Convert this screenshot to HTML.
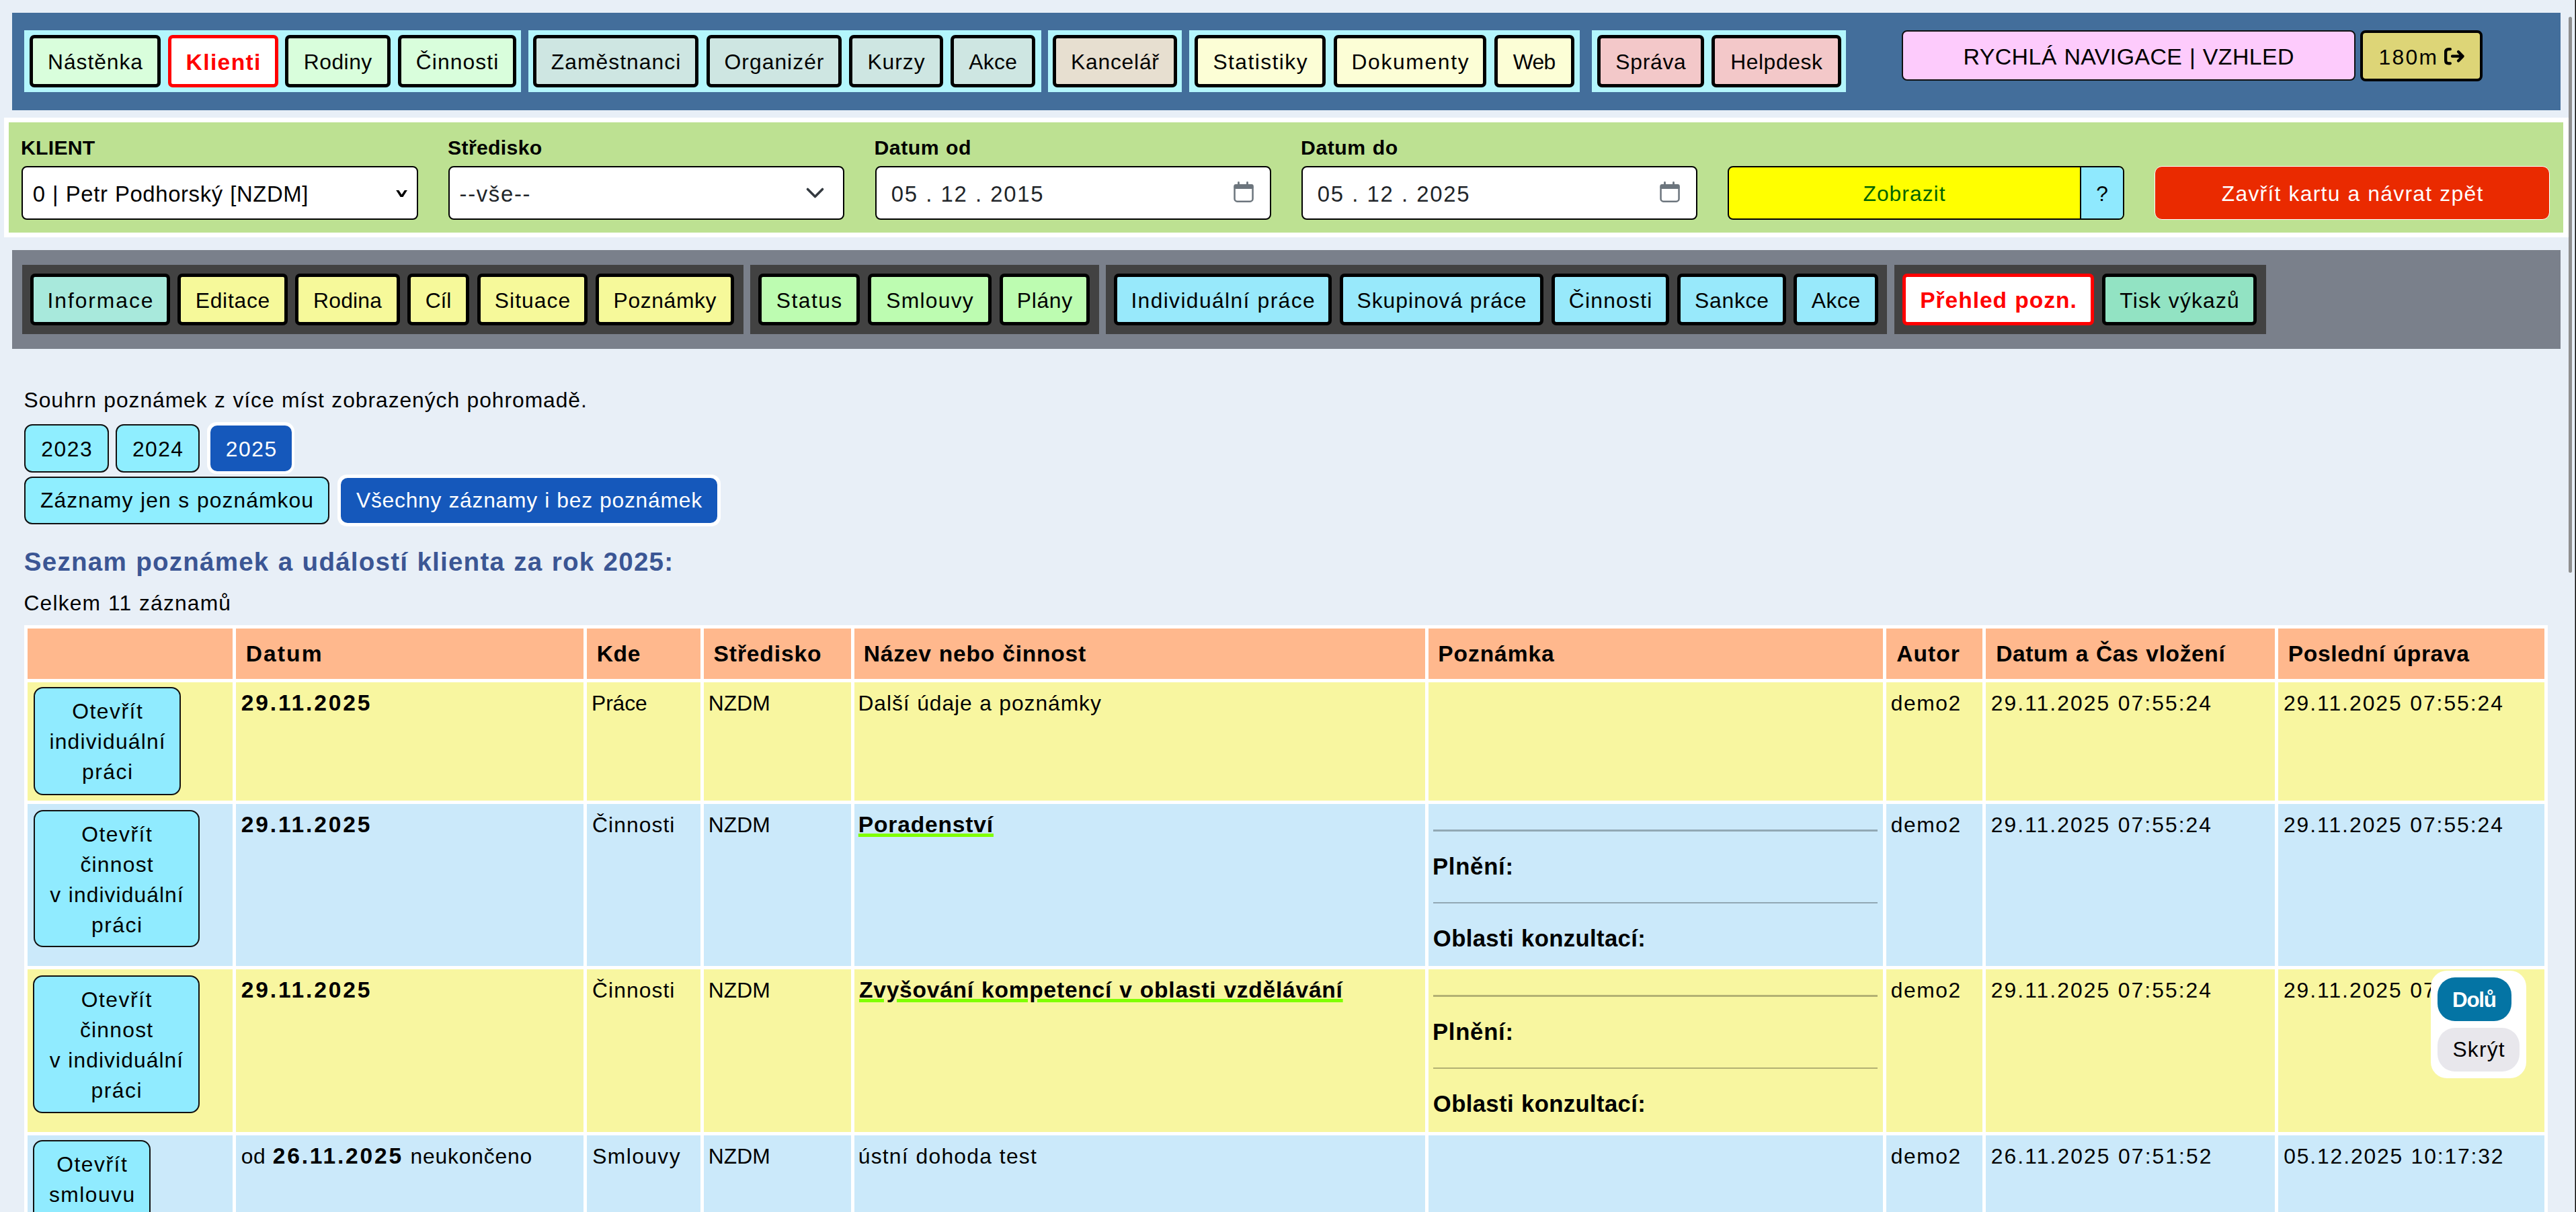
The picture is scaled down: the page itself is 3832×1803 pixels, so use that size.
<!DOCTYPE html>
<html><head><meta charset="utf-8"><title>Přehled poznámek</title>
<style>
html,body{margin:0;padding:0}
body{width:3832px;height:1803px;overflow:hidden;position:relative;background:#e8eff7;font-family:'Liberation Sans', sans-serif;color:#000}
.a{position:absolute;box-sizing:border-box}
.t{white-space:nowrap}
</style></head><body>
<div class="a" style="left:18px;top:19px;width:3791px;height:145px;background:#436e9b"></div>
<div class="a" style="left:36px;top:45px;width:739px;height:92px;background:#b3f6fc"></div>
<div class="a" style="left:786px;top:45px;width:763px;height:92px;background:#b3f6fc"></div>
<div class="a" style="left:1559px;top:45px;width:199px;height:92px;background:#b3f6fc"></div>
<div class="a" style="left:1769px;top:45px;width:581px;height:92px;background:#b3f6fc"></div>
<div class="a" style="left:2368px;top:45px;width:378px;height:92px;background:#b3f6fc"></div>
<div class="a" style="left:44px;top:52px;width:195px;height:78px;border:5px solid #000;border-radius:7px;background:#d9fedc"></div>
<div class="a t" style="left:44px;width:195px;text-align:center;text-indent:0.96px;top:75.32px;line-height:35.52px;font-size:31.80px;letter-spacing:0.96px;word-spacing:0.70px;font-weight:normal;color:#000;">Nástěnka</div>
<div class="a" style="left:250px;top:52px;width:164px;height:78px;border:5px solid #f00;border-radius:7px;background:#fff"></div>
<div class="a t" style="left:250px;width:164px;text-align:center;text-indent:1.38px;top:73.69px;line-height:37.53px;font-size:33.60px;letter-spacing:1.38px;word-spacing:1.11px;font-weight:bold;color:#f00;">Klienti</div>
<div class="a" style="left:424px;top:52px;width:157px;height:78px;border:5px solid #000;border-radius:7px;background:#d9fedc"></div>
<div class="a t" style="left:424px;width:157px;text-align:center;text-indent:0.49px;top:75.32px;line-height:35.52px;font-size:31.80px;letter-spacing:0.49px;word-spacing:0.70px;font-weight:normal;color:#000;">Rodiny</div>
<div class="a" style="left:592px;top:52px;width:176px;height:78px;border:5px solid #000;border-radius:7px;background:#d9fedc"></div>
<div class="a t" style="left:592px;width:176px;text-align:center;text-indent:1.11px;top:75.32px;line-height:35.52px;font-size:31.80px;letter-spacing:1.11px;word-spacing:0.70px;font-weight:normal;color:#000;">Činnosti</div>
<div class="a" style="left:793px;top:52px;width:246px;height:78px;border:5px solid #000;border-radius:7px;background:#cee6e2"></div>
<div class="a t" style="left:793px;width:246px;text-align:center;text-indent:1.05px;top:75.32px;line-height:35.52px;font-size:31.80px;letter-spacing:1.05px;word-spacing:0.70px;font-weight:normal;color:#000;">Zaměstnanci</div>
<div class="a" style="left:1051px;top:52px;width:201px;height:78px;border:5px solid #000;border-radius:7px;background:#cee6e2"></div>
<div class="a t" style="left:1051px;width:201px;text-align:center;text-indent:1.04px;top:75.32px;line-height:35.52px;font-size:31.80px;letter-spacing:1.04px;word-spacing:0.70px;font-weight:normal;color:#000;">Organizér</div>
<div class="a" style="left:1263px;top:52px;width:140px;height:78px;border:5px solid #000;border-radius:7px;background:#cee6e2"></div>
<div class="a t" style="left:1263px;width:140px;text-align:center;text-indent:0.96px;top:75.32px;line-height:35.52px;font-size:31.80px;letter-spacing:0.96px;word-spacing:0.70px;font-weight:normal;color:#000;">Kurzy</div>
<div class="a" style="left:1414px;top:52px;width:126px;height:78px;border:5px solid #000;border-radius:7px;background:#cee6e2"></div>
<div class="a t" style="left:1414px;width:126px;text-align:center;text-indent:0.33px;top:75.32px;line-height:35.52px;font-size:31.80px;letter-spacing:0.33px;word-spacing:0.70px;font-weight:normal;color:#000;">Akce</div>
<div class="a" style="left:1566px;top:52px;width:185px;height:78px;border:5px solid #000;border-radius:7px;background:#e7dfd0"></div>
<div class="a t" style="left:1566px;width:185px;text-align:center;text-indent:0.78px;top:75.32px;line-height:35.52px;font-size:31.80px;letter-spacing:0.78px;word-spacing:0.70px;font-weight:normal;color:#000;">Kancelář</div>
<div class="a" style="left:1777px;top:52px;width:195px;height:78px;border:5px solid #000;border-radius:7px;background:#fcfed6"></div>
<div class="a t" style="left:1777px;width:195px;text-align:center;text-indent:1.43px;top:75.32px;line-height:35.52px;font-size:31.80px;letter-spacing:1.43px;word-spacing:0.70px;font-weight:normal;color:#000;">Statistiky</div>
<div class="a" style="left:1984px;top:52px;width:227px;height:78px;border:5px solid #000;border-radius:7px;background:#fcfed6"></div>
<div class="a t" style="left:1984px;width:227px;text-align:center;text-indent:1.66px;top:75.32px;line-height:35.52px;font-size:31.80px;letter-spacing:1.66px;word-spacing:0.70px;font-weight:normal;color:#000;">Dokumenty</div>
<div class="a" style="left:2223px;top:52px;width:119px;height:78px;border:5px solid #000;border-radius:7px;background:#fcfed6"></div>
<div class="a t" style="left:2223px;width:119px;text-align:center;text-indent:-0.64px;top:75.32px;line-height:35.52px;font-size:31.80px;letter-spacing:-0.64px;word-spacing:0.70px;font-weight:normal;color:#000;">Web</div>
<div class="a" style="left:2376px;top:52px;width:159px;height:78px;border:5px solid #000;border-radius:7px;background:#f3c8c9"></div>
<div class="a t" style="left:2376px;width:159px;text-align:center;text-indent:0.76px;top:75.32px;line-height:35.52px;font-size:31.80px;letter-spacing:0.76px;word-spacing:0.70px;font-weight:normal;color:#000;">Správa</div>
<div class="a" style="left:2546px;top:52px;width:193px;height:78px;border:5px solid #000;border-radius:7px;background:#f3c8c9"></div>
<div class="a t" style="left:2546px;width:193px;text-align:center;text-indent:0.59px;top:75.32px;line-height:35.52px;font-size:31.80px;letter-spacing:0.59px;word-spacing:0.70px;font-weight:normal;color:#000;">Helpdesk</div>
<div class="a" style="left:2829px;top:45px;width:675px;height:75px;border:2px solid #111;border-radius:8px;background:#fdcbfc"></div>
<div class="a t" style="left:2829px;width:675px;text-align:center;text-indent:0.41px;top:65.80px;line-height:37.89px;font-size:33.92px;letter-spacing:0.41px;word-spacing:0.75px;font-weight:normal;color:#000;">RYCHLÁ NAVIGACE | VZHLED</div>
<div class="a" style="left:3511px;top:45px;width:182px;height:76px;border:4px solid #000;border-radius:8px;background:#ddd577"></div>
<div class="a t" style="left:3538.61px;top:67.72px;line-height:35.52px;font-size:31.80px;letter-spacing:2.32px;word-spacing:0.70px;font-weight:normal;color:#000;">180m</div>
<svg class="a" style="left:3630px;top:65px" width="40" height="40" viewBox="0 0 40 40"><path d="M14.85 8.15 H12.5 Q8.15 8.15 8.15 12.5 V25 Q8.15 29.35 12.5 29.35 H14.85" fill="none" stroke="#000" stroke-width="4.3" stroke-linecap="round"/><path d="M18 18.7 H33.6 M27 12 L33.6 18.7 L27 25.4" fill="none" stroke="#000" stroke-width="4.3" stroke-linecap="round" stroke-linejoin="round"/></svg>
<div class="a" style="left:6px;top:175px;width:3815px;height:178px;background:#fff"></div>
<div class="a" style="left:13px;top:182px;width:3800px;height:164px;background:#bde192"></div>
<div class="a t" style="left:31.03px;top:203.13px;line-height:33.78px;font-size:30.24px;letter-spacing:0.22px;word-spacing:1.00px;font-weight:bold;color:#000;">KLIENT</div>
<div class="a t" style="left:666.09px;top:203.13px;line-height:33.78px;font-size:30.24px;letter-spacing:0.30px;word-spacing:1.00px;font-weight:bold;color:#000;">Středisko</div>
<div class="a t" style="left:1300.53px;top:203.13px;line-height:33.78px;font-size:30.24px;letter-spacing:0.50px;word-spacing:1.00px;font-weight:bold;color:#000;">Datum od</div>
<div class="a t" style="left:1935.03px;top:203.13px;line-height:33.78px;font-size:30.24px;letter-spacing:0.54px;word-spacing:1.00px;font-weight:bold;color:#000;">Datum do</div>
<div class="a" style="left:32px;top:247px;width:590px;height:80px;border:2px solid #000;border-radius:8px;background:#fff;"></div>
<div class="a t" style="left:48.69px;top:270.76px;line-height:36.70px;font-size:32.86px;letter-spacing:0.62px;word-spacing:0.73px;font-weight:normal;color:#000;">0 | Petr Podhorský [NZDM]</div>
<svg class="a" style="left:585px;top:279px" width="24" height="18" viewBox="0 0 24 18"><path d="M4.2 3.9 H8.3 L12.55 10.5 L16.8 3.9 H20.9 L14.5 14.1 H10.6 Z" fill="#000"/></svg>
<div class="a" style="left:667px;top:247px;width:589px;height:80px;border:2px solid #000;border-radius:8px;background:#fff;"></div>
<div class="a t" style="left:683.52px;top:270.76px;line-height:36.70px;font-size:32.86px;letter-spacing:1.67px;word-spacing:0.73px;font-weight:normal;color:#212529;">--vše--</div>
<svg class="a" style="left:1197px;top:277px" width="30" height="20" viewBox="0 0 30 20"><path d="M4.5 4.5 L15.5 15.5 L26.5 4.5" fill="none" stroke="#343a40" stroke-width="3.6" stroke-linecap="round" stroke-linejoin="round"/></svg>
<div class="a" style="left:1302px;top:247px;width:589px;height:80px;border:2px solid #000;border-radius:8px;background:#fff;"></div>
<div class="a t" style="left:1325.69px;top:270.76px;line-height:36.70px;font-size:32.86px;letter-spacing:1.68px;word-spacing:0.73px;font-weight:normal;color:#212529;">05 . 12 . 2015</div>
<svg class="a" style="left:1830px;top:267px" width="40" height="36" viewBox="0 0 40 36"><rect x="6.55" y="8.15" width="27" height="24.5" rx="4" fill="none" stroke="#6c757d" stroke-width="2.5"/><rect x="5.3" y="7" width="29.5" height="7" rx="3" fill="#6c757d"/><path d="M12.5 4.5 V8 M25.5 4.5 V8" stroke="#6c757d" stroke-width="2.8" stroke-linecap="round"/></svg>
<div class="a" style="left:1936px;top:247px;width:589px;height:80px;border:2px solid #000;border-radius:8px;background:#fff;"></div>
<div class="a t" style="left:1959.69px;top:270.76px;line-height:36.70px;font-size:32.86px;letter-spacing:1.68px;word-spacing:0.73px;font-weight:normal;color:#212529;">05 . 12 . 2025</div>
<svg class="a" style="left:2464px;top:267px" width="40" height="36" viewBox="0 0 40 36"><rect x="6.55" y="8.15" width="27" height="24.5" rx="4" fill="none" stroke="#6c757d" stroke-width="2.5"/><rect x="5.3" y="7" width="29.5" height="7" rx="3" fill="#6c757d"/><path d="M12.5 4.5 V8 M25.5 4.5 V8" stroke="#6c757d" stroke-width="2.8" stroke-linecap="round"/></svg>
<div class="a" style="left:2570px;top:247px;width:590px;height:80px;border:2px solid #000;border-radius:8px;background:#ffff00;overflow:hidden"><div class="a" style="left:522px;top:0;width:66px;height:76px;border-left:2px solid #000;background:#8fe9fe"></div></div>
<div class="a t" style="left:2570px;width:525px;text-align:center;text-indent:1.04px;top:270.72px;line-height:35.52px;font-size:31.80px;letter-spacing:1.04px;word-spacing:0.70px;font-weight:normal;color:#006400;">Zobrazit</div>
<div class="a t" style="left:3095px;width:64px;text-align:center;text-indent:-2.76px;top:270.72px;line-height:35.52px;font-size:31.80px;letter-spacing:-2.76px;word-spacing:0.70px;font-weight:normal;color:#000;">?</div>
<div class="a" style="left:3205px;top:247px;width:588px;height:80px;border:1.5px solid #fff;border-radius:11px;background:#ea2a00"></div>
<div class="a t" style="left:3205px;width:588px;text-align:center;text-indent:1.29px;top:270.72px;line-height:35.52px;font-size:31.80px;letter-spacing:1.29px;word-spacing:0.70px;font-weight:normal;color:#fff;">Zavřít kartu a návrat zpět</div>
<div class="a" style="left:18px;top:372px;width:3791px;height:147px;background:#7a808b"></div>
<div class="a" style="left:33px;top:394px;width:1073px;height:103px;background:#424242"></div>
<div class="a" style="left:1116px;top:394px;width:519px;height:103px;background:#424242"></div>
<div class="a" style="left:1645px;top:394px;width:1162px;height:103px;background:#424242"></div>
<div class="a" style="left:2818px;top:394px;width:553px;height:103px;background:#424242"></div>
<div class="a" style="left:45px;top:407px;width:208px;height:77px;border:5px solid #000;border-radius:7px;background:#a8e9dc"></div>
<div class="a t" style="left:45px;width:208px;text-align:center;text-indent:1.93px;top:429.72px;line-height:35.52px;font-size:31.80px;letter-spacing:1.93px;word-spacing:0.70px;font-weight:normal;color:#000;">Informace</div>
<div class="a" style="left:264px;top:407px;width:164px;height:77px;border:5px solid #000;border-radius:7px;background:#f6f99a"></div>
<div class="a t" style="left:264px;width:164px;text-align:center;text-indent:0.74px;top:429.72px;line-height:35.52px;font-size:31.80px;letter-spacing:0.74px;word-spacing:0.70px;font-weight:normal;color:#000;">Editace</div>
<div class="a" style="left:439px;top:407px;width:156px;height:77px;border:5px solid #000;border-radius:7px;background:#f6f99a"></div>
<div class="a t" style="left:439px;width:156px;text-align:center;text-indent:0.23px;top:429.72px;line-height:35.52px;font-size:31.80px;letter-spacing:0.23px;word-spacing:0.70px;font-weight:normal;color:#000;">Rodina</div>
<div class="a" style="left:606px;top:407px;width:92px;height:77px;border:5px solid #000;border-radius:7px;background:#f6f99a"></div>
<div class="a t" style="left:606px;width:92px;text-align:center;text-indent:-0.17px;top:429.72px;line-height:35.52px;font-size:31.80px;letter-spacing:-0.17px;word-spacing:0.70px;font-weight:normal;color:#000;">Cíl</div>
<div class="a" style="left:710px;top:407px;width:164px;height:77px;border:5px solid #000;border-radius:7px;background:#f6f99a"></div>
<div class="a t" style="left:710px;width:164px;text-align:center;text-indent:1.05px;top:429.72px;line-height:35.52px;font-size:31.80px;letter-spacing:1.05px;word-spacing:0.70px;font-weight:normal;color:#000;">Situace</div>
<div class="a" style="left:886px;top:407px;width:206px;height:77px;border:5px solid #000;border-radius:7px;background:#f6f99a"></div>
<div class="a t" style="left:886px;width:206px;text-align:center;text-indent:0.64px;top:429.72px;line-height:35.52px;font-size:31.80px;letter-spacing:0.64px;word-spacing:0.70px;font-weight:normal;color:#000;">Poznámky</div>
<div class="a" style="left:1128px;top:407px;width:151px;height:77px;border:5px solid #000;border-radius:7px;background:#bdfcb1"></div>
<div class="a t" style="left:1128px;width:151px;text-align:center;text-indent:1.48px;top:429.72px;line-height:35.52px;font-size:31.80px;letter-spacing:1.48px;word-spacing:0.70px;font-weight:normal;color:#000;">Status</div>
<div class="a" style="left:1291px;top:407px;width:184px;height:77px;border:5px solid #000;border-radius:7px;background:#bdfcb1"></div>
<div class="a t" style="left:1291px;width:184px;text-align:center;text-indent:1.27px;top:429.72px;line-height:35.52px;font-size:31.80px;letter-spacing:1.27px;word-spacing:0.70px;font-weight:normal;color:#000;">Smlouvy</div>
<div class="a" style="left:1487px;top:407px;width:134px;height:77px;border:5px solid #000;border-radius:7px;background:#bdfcb1"></div>
<div class="a t" style="left:1487px;width:134px;text-align:center;text-indent:0.70px;top:429.72px;line-height:35.52px;font-size:31.80px;letter-spacing:0.70px;word-spacing:0.70px;font-weight:normal;color:#000;">Plány</div>
<div class="a" style="left:1657px;top:407px;width:324px;height:77px;border:5px solid #000;border-radius:7px;background:#98e9fb"></div>
<div class="a t" style="left:1657px;width:324px;text-align:center;text-indent:1.37px;top:429.72px;line-height:35.52px;font-size:31.80px;letter-spacing:1.37px;word-spacing:0.70px;font-weight:normal;color:#000;">Individuální práce</div>
<div class="a" style="left:1993px;top:407px;width:303px;height:77px;border:5px solid #000;border-radius:7px;background:#98e9fb"></div>
<div class="a t" style="left:1993px;width:303px;text-align:center;text-indent:1.04px;top:429.72px;line-height:35.52px;font-size:31.80px;letter-spacing:1.04px;word-spacing:0.70px;font-weight:normal;color:#000;">Skupinová práce</div>
<div class="a" style="left:2308px;top:407px;width:175px;height:77px;border:5px solid #000;border-radius:7px;background:#98e9fb"></div>
<div class="a t" style="left:2308px;width:175px;text-align:center;text-indent:1.24px;top:429.72px;line-height:35.52px;font-size:31.80px;letter-spacing:1.24px;word-spacing:0.70px;font-weight:normal;color:#000;">Činnosti</div>
<div class="a" style="left:2495px;top:407px;width:162px;height:77px;border:5px solid #000;border-radius:7px;background:#98e9fb"></div>
<div class="a t" style="left:2495px;width:162px;text-align:center;text-indent:0.76px;top:429.72px;line-height:35.52px;font-size:31.80px;letter-spacing:0.76px;word-spacing:0.70px;font-weight:normal;color:#000;">Sankce</div>
<div class="a" style="left:2668px;top:407px;width:126px;height:77px;border:5px solid #000;border-radius:7px;background:#98e9fb"></div>
<div class="a t" style="left:2668px;width:126px;text-align:center;text-indent:0.60px;top:429.72px;line-height:35.52px;font-size:31.80px;letter-spacing:0.60px;word-spacing:0.70px;font-weight:normal;color:#000;">Akce</div>
<div class="a" style="left:2830px;top:407px;width:285px;height:77px;border:5px solid #f00;border-radius:7px;background:#fff"></div>
<div class="a t" style="left:2830px;width:285px;text-align:center;text-indent:0.94px;top:428.09px;line-height:37.53px;font-size:33.60px;letter-spacing:0.94px;word-spacing:1.11px;font-weight:bold;color:#f00;">Přehled pozn.</div>
<div class="a" style="left:3127px;top:407px;width:230px;height:77px;border:5px solid #000;border-radius:7px;background:#92e3c3"></div>
<div class="a t" style="left:3127px;width:230px;text-align:center;text-indent:1.17px;top:429.72px;line-height:35.52px;font-size:31.80px;letter-spacing:1.17px;word-spacing:0.70px;font-weight:normal;color:#000;">Tisk výkazů</div>
<div class="a t" style="left:35.57px;top:577.72px;line-height:35.52px;font-size:31.80px;letter-spacing:0.95px;word-spacing:0.70px;font-weight:normal;color:#000;">Souhrn poznámek z více míst zobrazených pohromadě.</div>
<div class="a" style="left:36px;top:631px;width:126px;height:72px;border:2px solid #111;border-radius:12px;background:#8feeff;"></div>
<div class="a t" style="left:36px;width:126px;text-align:center;text-indent:1.62px;top:651.02px;line-height:35.52px;font-size:31.80px;letter-spacing:1.62px;word-spacing:0.70px;font-weight:normal;color:#000;">2023</div>
<div class="a" style="left:172px;top:631px;width:125px;height:72px;border:2px solid #111;border-radius:12px;background:#8feeff;"></div>
<div class="a t" style="left:172px;width:125px;text-align:center;text-indent:1.46px;top:651.02px;line-height:35.52px;font-size:31.80px;letter-spacing:1.46px;word-spacing:0.70px;font-weight:normal;color:#000;">2024</div>
<div class="a" style="left:308px;top:628px;width:130px;height:77px;background:#fff;border-radius:14px"></div>
<div class="a" style="left:313px;top:633px;width:121px;height:68px;background:#1558bb;border-radius:10px"></div>
<div class="a t" style="left:313px;width:121px;text-align:center;text-indent:1.57px;top:651.02px;line-height:35.52px;font-size:31.80px;letter-spacing:1.57px;word-spacing:0.70px;font-weight:normal;color:#fff;">2025</div>
<div class="a" style="left:36px;top:709px;width:454px;height:71px;border:2px solid #111;border-radius:12px;background:#8feeff;"></div>
<div class="a t" style="left:36px;width:454px;text-align:center;text-indent:1.08px;top:727.42px;line-height:35.52px;font-size:31.80px;letter-spacing:1.08px;word-spacing:0.70px;font-weight:normal;color:#000;">Záznamy jen s poznámkou</div>
<div class="a" style="left:502px;top:706px;width:570px;height:77px;background:#fff;border-radius:14px"></div>
<div class="a" style="left:507px;top:711px;width:560px;height:67px;background:#1558bb;border-radius:10px"></div>
<div class="a t" style="left:507px;width:560px;text-align:center;text-indent:0.75px;top:727.42px;line-height:35.52px;font-size:31.80px;letter-spacing:0.75px;word-spacing:0.70px;font-weight:normal;color:#fff;">Všechny záznamy i bez poznámek</div>
<div class="a t" style="left:35.84px;top:814.03px;line-height:43.16px;font-size:38.64px;letter-spacing:1.19px;word-spacing:1.28px;font-weight:bold;color:#3b5694;">Seznam poznámek a událostí klienta za rok 2025:</div>
<div class="a t" style="left:35.41px;top:880.32px;line-height:35.52px;font-size:31.80px;letter-spacing:1.17px;word-spacing:0.70px;font-weight:normal;color:#000;">Celkem 11 záznamů</div>
<div class="a" style="left:36px;top:930px;width:3754px;height:873px;background:#fff"></div>
<div class="a" style="left:41px;top:935px;width:305px;height:75px;background:#ffb88d"></div>
<div class="a" style="left:351px;top:935px;width:517px;height:75px;background:#ffb88d"></div>
<div class="a" style="left:873px;top:935px;width:169px;height:75px;background:#ffb88d"></div>
<div class="a" style="left:1047px;top:935px;width:219px;height:75px;background:#ffb88d"></div>
<div class="a" style="left:1271px;top:935px;width:849px;height:75px;background:#ffb88d"></div>
<div class="a" style="left:2125px;top:935px;width:676px;height:75px;background:#ffb88d"></div>
<div class="a" style="left:2806px;top:935px;width:143px;height:75px;background:#ffb88d"></div>
<div class="a" style="left:2954px;top:935px;width:430px;height:75px;background:#ffb88d"></div>
<div class="a" style="left:3389px;top:935px;width:396px;height:75px;background:#ffb88d"></div>
<div class="a" style="left:41px;top:1015px;width:305px;height:176px;background:#f8f6a0"></div>
<div class="a" style="left:351px;top:1015px;width:517px;height:176px;background:#f8f6a0"></div>
<div class="a" style="left:873px;top:1015px;width:169px;height:176px;background:#f8f6a0"></div>
<div class="a" style="left:1047px;top:1015px;width:219px;height:176px;background:#f8f6a0"></div>
<div class="a" style="left:1271px;top:1015px;width:849px;height:176px;background:#f8f6a0"></div>
<div class="a" style="left:2125px;top:1015px;width:676px;height:176px;background:#f8f6a0"></div>
<div class="a" style="left:2806px;top:1015px;width:143px;height:176px;background:#f8f6a0"></div>
<div class="a" style="left:2954px;top:1015px;width:430px;height:176px;background:#f8f6a0"></div>
<div class="a" style="left:3389px;top:1015px;width:396px;height:176px;background:#f8f6a0"></div>
<div class="a" style="left:41px;top:1196px;width:305px;height:241px;background:#cbe9fa"></div>
<div class="a" style="left:351px;top:1196px;width:517px;height:241px;background:#cbe9fa"></div>
<div class="a" style="left:873px;top:1196px;width:169px;height:241px;background:#cbe9fa"></div>
<div class="a" style="left:1047px;top:1196px;width:219px;height:241px;background:#cbe9fa"></div>
<div class="a" style="left:1271px;top:1196px;width:849px;height:241px;background:#cbe9fa"></div>
<div class="a" style="left:2125px;top:1196px;width:676px;height:241px;background:#cbe9fa"></div>
<div class="a" style="left:2806px;top:1196px;width:143px;height:241px;background:#cbe9fa"></div>
<div class="a" style="left:2954px;top:1196px;width:430px;height:241px;background:#cbe9fa"></div>
<div class="a" style="left:3389px;top:1196px;width:396px;height:241px;background:#cbe9fa"></div>
<div class="a" style="left:41px;top:1442px;width:305px;height:242px;background:#f8f6a0"></div>
<div class="a" style="left:351px;top:1442px;width:517px;height:242px;background:#f8f6a0"></div>
<div class="a" style="left:873px;top:1442px;width:169px;height:242px;background:#f8f6a0"></div>
<div class="a" style="left:1047px;top:1442px;width:219px;height:242px;background:#f8f6a0"></div>
<div class="a" style="left:1271px;top:1442px;width:849px;height:242px;background:#f8f6a0"></div>
<div class="a" style="left:2125px;top:1442px;width:676px;height:242px;background:#f8f6a0"></div>
<div class="a" style="left:2806px;top:1442px;width:143px;height:242px;background:#f8f6a0"></div>
<div class="a" style="left:2954px;top:1442px;width:430px;height:242px;background:#f8f6a0"></div>
<div class="a" style="left:3389px;top:1442px;width:396px;height:242px;background:#f8f6a0"></div>
<div class="a" style="left:41px;top:1689px;width:305px;height:114px;background:#cbe9fa"></div>
<div class="a" style="left:351px;top:1689px;width:517px;height:114px;background:#cbe9fa"></div>
<div class="a" style="left:873px;top:1689px;width:169px;height:114px;background:#cbe9fa"></div>
<div class="a" style="left:1047px;top:1689px;width:219px;height:114px;background:#cbe9fa"></div>
<div class="a" style="left:1271px;top:1689px;width:849px;height:114px;background:#cbe9fa"></div>
<div class="a" style="left:2125px;top:1689px;width:676px;height:114px;background:#cbe9fa"></div>
<div class="a" style="left:2806px;top:1689px;width:143px;height:114px;background:#cbe9fa"></div>
<div class="a" style="left:2954px;top:1689px;width:430px;height:114px;background:#cbe9fa"></div>
<div class="a" style="left:3389px;top:1689px;width:396px;height:114px;background:#cbe9fa"></div>
<div class="a t" style="left:365.82px;top:954.09px;line-height:37.53px;font-size:33.60px;letter-spacing:2.05px;word-spacing:1.11px;font-weight:bold;color:#000;">Datum</div>
<div class="a t" style="left:887.82px;top:954.09px;line-height:37.53px;font-size:33.60px;letter-spacing:0.53px;word-spacing:1.11px;font-weight:bold;color:#000;">Kde</div>
<div class="a t" style="left:1061.59px;top:954.09px;line-height:37.53px;font-size:33.60px;letter-spacing:0.86px;word-spacing:1.11px;font-weight:bold;color:#000;">Středisko</div>
<div class="a t" style="left:1284.82px;top:954.09px;line-height:37.53px;font-size:33.60px;letter-spacing:0.75px;word-spacing:1.11px;font-weight:bold;color:#000;">Název nebo činnost</div>
<div class="a t" style="left:2139.32px;top:954.09px;line-height:37.53px;font-size:33.60px;letter-spacing:0.89px;word-spacing:1.11px;font-weight:bold;color:#000;">Poznámka</div>
<div class="a t" style="left:2821.16px;top:954.09px;line-height:37.53px;font-size:33.60px;letter-spacing:1.02px;word-spacing:1.11px;font-weight:bold;color:#000;">Autor</div>
<div class="a t" style="left:2969.22px;top:954.09px;line-height:37.53px;font-size:33.60px;letter-spacing:0.59px;word-spacing:1.11px;font-weight:bold;color:#000;">Datum a Čas vložení</div>
<div class="a t" style="left:3403.82px;top:954.09px;line-height:37.53px;font-size:33.60px;letter-spacing:0.61px;word-spacing:1.11px;font-weight:bold;color:#000;">Poslední úprava</div>
<div class="a" style="left:50px;top:1022px;width:219px;height:161px;border:2px solid #111;border-radius:14px;background:#90ebff;"></div>
<div class="a t" style="left:50px;width:219px;text-align:center;text-indent:1.53px;top:1040.72px;line-height:35.52px;font-size:31.80px;letter-spacing:1.53px;word-spacing:0.70px;font-weight:normal;color:#000;">Otevřít</div>
<div class="a t" style="left:50px;width:219px;text-align:center;text-indent:1.19px;top:1085.72px;line-height:35.52px;font-size:31.80px;letter-spacing:1.19px;word-spacing:0.70px;font-weight:normal;color:#000;">individuální</div>
<div class="a t" style="left:50px;width:219px;text-align:center;text-indent:1.52px;top:1130.72px;line-height:35.52px;font-size:31.80px;letter-spacing:1.52px;word-spacing:0.70px;font-weight:normal;color:#000;">práci</div>
<div class="a" style="left:50px;top:1205px;width:247px;height:204px;border:2px solid #111;border-radius:14px;background:#90ebff;"></div>
<div class="a t" style="left:50px;width:247px;text-align:center;text-indent:1.53px;top:1223.72px;line-height:35.52px;font-size:31.80px;letter-spacing:1.53px;word-spacing:0.70px;font-weight:normal;color:#000;">Otevřít</div>
<div class="a t" style="left:50px;width:247px;text-align:center;text-indent:1.25px;top:1268.72px;line-height:35.52px;font-size:31.80px;letter-spacing:1.25px;word-spacing:0.70px;font-weight:normal;color:#000;">činnost</div>
<div class="a t" style="left:50px;width:247px;text-align:center;text-indent:1.07px;top:1313.72px;line-height:35.52px;font-size:31.80px;letter-spacing:1.07px;word-spacing:0.70px;font-weight:normal;color:#000;">v individuální</div>
<div class="a t" style="left:50px;width:247px;text-align:center;text-indent:1.52px;top:1358.72px;line-height:35.52px;font-size:31.80px;letter-spacing:1.52px;word-spacing:0.70px;font-weight:normal;color:#000;">práci</div>
<div class="a" style="left:49px;top:1451px;width:248px;height:205px;border:2px solid #111;border-radius:14px;background:#90ebff;"></div>
<div class="a t" style="left:49px;width:248px;text-align:center;text-indent:1.53px;top:1469.72px;line-height:35.52px;font-size:31.80px;letter-spacing:1.53px;word-spacing:0.70px;font-weight:normal;color:#000;">Otevřít</div>
<div class="a t" style="left:49px;width:248px;text-align:center;text-indent:1.25px;top:1514.72px;line-height:35.52px;font-size:31.80px;letter-spacing:1.25px;word-spacing:0.70px;font-weight:normal;color:#000;">činnost</div>
<div class="a t" style="left:49px;width:248px;text-align:center;text-indent:1.07px;top:1559.72px;line-height:35.52px;font-size:31.80px;letter-spacing:1.07px;word-spacing:0.70px;font-weight:normal;color:#000;">v individuální</div>
<div class="a t" style="left:49px;width:248px;text-align:center;text-indent:1.52px;top:1604.72px;line-height:35.52px;font-size:31.80px;letter-spacing:1.52px;word-spacing:0.70px;font-weight:normal;color:#000;">práci</div>
<div class="a" style="left:49px;top:1696px;width:175px;height:205px;border:2px solid #111;border-radius:14px;background:#90ebff;"></div>
<div class="a t" style="left:49px;width:175px;text-align:center;text-indent:1.53px;top:1714.72px;line-height:35.52px;font-size:31.80px;letter-spacing:1.53px;word-spacing:0.70px;font-weight:normal;color:#000;">Otevřít</div>
<div class="a t" style="left:49px;width:175px;text-align:center;text-indent:1.46px;top:1759.72px;line-height:35.52px;font-size:31.80px;letter-spacing:1.46px;word-spacing:0.70px;font-weight:normal;color:#000;">smlouvu</div>
<div class="a t" style="left:358.824px;top:1028.22px;line-height:35.52px;font-size:31.80px;color:#000"><span style="font-size:33.60px;letter-spacing:2.82px;word-spacing:1.11px;font-weight:bold;">29.11.2025</span></div>
<div class="a t" style="left:880.06px;top:1028.72px;line-height:35.52px;font-size:31.80px;letter-spacing:-0.11px;word-spacing:0.70px;font-weight:normal;color:#000;">Práce</div>
<div class="a t" style="left:1053.76px;top:1028.72px;line-height:35.52px;font-size:31.80px;letter-spacing:0.02px;word-spacing:0.70px;font-weight:normal;color:#000;">NZDM</div>
<div class="a t" style="left:1276.46px;top:1028.72px;line-height:35.52px;font-size:31.80px;letter-spacing:0.95px;word-spacing:0.70px;font-weight:normal;color:#000;">Další údaje a poznámky</div>
<div class="a t" style="left:2812.73px;top:1028.72px;line-height:35.52px;font-size:31.80px;letter-spacing:1.58px;word-spacing:0.70px;font-weight:normal;color:#000;">demo2</div>
<div class="a t" style="left:2961.81px;top:1028.72px;line-height:35.52px;font-size:31.80px;letter-spacing:2.06px;word-spacing:0.70px;font-weight:normal;color:#000;">29.11.2025 07:55:24</div>
<div class="a t" style="left:3396.91px;top:1028.72px;line-height:35.52px;font-size:31.80px;letter-spacing:2.00px;word-spacing:0.70px;font-weight:normal;color:#000;">29.11.2025 07:55:24</div>
<div class="a t" style="left:358.824px;top:1209.22px;line-height:35.52px;font-size:31.80px;color:#000"><span style="font-size:33.60px;letter-spacing:2.82px;word-spacing:1.11px;font-weight:bold;">29.11.2025</span></div>
<div class="a t" style="left:881.01px;top:1209.72px;line-height:35.52px;font-size:31.80px;letter-spacing:1.07px;word-spacing:0.70px;font-weight:normal;color:#000;">Činnosti</div>
<div class="a t" style="left:1053.76px;top:1209.72px;line-height:35.52px;font-size:31.80px;letter-spacing:0.02px;word-spacing:0.70px;font-weight:normal;color:#000;">NZDM</div>
<div class="a t" style="left:1276.82px;top:1208.09px;line-height:37.53px;font-size:33.60px;letter-spacing:0.81px;word-spacing:1.11px;font-weight:bold;color:#000;text-decoration:underline;text-decoration-color:#80ff00;text-decoration-thickness:5px;text-underline-offset:2.0px;text-decoration-skip-ink:auto">Poradenství</div>
<div class="a t" style="left:2812.73px;top:1209.72px;line-height:35.52px;font-size:31.80px;letter-spacing:1.58px;word-spacing:0.70px;font-weight:normal;color:#000;">demo2</div>
<div class="a t" style="left:2961.81px;top:1209.72px;line-height:35.52px;font-size:31.80px;letter-spacing:2.06px;word-spacing:0.70px;font-weight:normal;color:#000;">29.11.2025 07:55:24</div>
<div class="a t" style="left:3396.91px;top:1209.72px;line-height:35.52px;font-size:31.80px;letter-spacing:2.00px;word-spacing:0.70px;font-weight:normal;color:#000;">29.11.2025 07:55:24</div>
<div class="a t" style="left:358.824px;top:1455.22px;line-height:35.52px;font-size:31.80px;color:#000"><span style="font-size:33.60px;letter-spacing:2.82px;word-spacing:1.11px;font-weight:bold;">29.11.2025</span></div>
<div class="a t" style="left:881.01px;top:1455.72px;line-height:35.52px;font-size:31.80px;letter-spacing:1.07px;word-spacing:0.70px;font-weight:normal;color:#000;">Činnosti</div>
<div class="a t" style="left:1053.76px;top:1455.72px;line-height:35.52px;font-size:31.80px;letter-spacing:0.02px;word-spacing:0.70px;font-weight:normal;color:#000;">NZDM</div>
<div class="a t" style="left:1277.99px;top:1454.09px;line-height:37.53px;font-size:33.60px;letter-spacing:0.74px;word-spacing:1.11px;font-weight:bold;color:#000;text-decoration:underline;text-decoration-color:#80ff00;text-decoration-thickness:5px;text-underline-offset:2.0px;text-decoration-skip-ink:auto">Zvyšování kompetencí v oblasti vzdělávání</div>
<div class="a t" style="left:2812.73px;top:1455.72px;line-height:35.52px;font-size:31.80px;letter-spacing:1.58px;word-spacing:0.70px;font-weight:normal;color:#000;">demo2</div>
<div class="a t" style="left:2961.81px;top:1455.72px;line-height:35.52px;font-size:31.80px;letter-spacing:2.06px;word-spacing:0.70px;font-weight:normal;color:#000;">29.11.2025 07:55:24</div>
<div class="a t" style="left:3396.91px;top:1455.72px;line-height:35.52px;font-size:31.80px;letter-spacing:2.00px;word-spacing:0.70px;font-weight:normal;color:#000;">29.11.2025 07:55:24</div>
<div class="a t" style="left:358.728px;top:1702.22px;line-height:35.52px;font-size:31.80px;color:#000"><span style="font-size:31.80px;letter-spacing:0.67px;word-spacing:0.70px;font-weight:normal;">od </span><span style="font-size:33.60px;letter-spacing:2.82px;word-spacing:1.11px;font-weight:bold;">26.11.2025</span><span style="font-size:31.80px;letter-spacing:0.84px;word-spacing:0.70px;font-weight:normal;"> neukončeno</span></div>
<div class="a t" style="left:881.17px;top:1702.72px;line-height:35.52px;font-size:31.80px;letter-spacing:1.41px;word-spacing:0.70px;font-weight:normal;color:#000;">Smlouvy</div>
<div class="a t" style="left:1053.76px;top:1702.72px;line-height:35.52px;font-size:31.80px;letter-spacing:0.02px;word-spacing:0.70px;font-weight:normal;color:#000;">NZDM</div>
<div class="a t" style="left:1276.77px;top:1702.72px;line-height:35.52px;font-size:31.80px;letter-spacing:1.23px;word-spacing:0.70px;font-weight:normal;color:#000;">ústní dohoda test</div>
<div class="a t" style="left:2812.73px;top:1702.72px;line-height:35.52px;font-size:31.80px;letter-spacing:1.58px;word-spacing:0.70px;font-weight:normal;color:#000;">demo2</div>
<div class="a t" style="left:2961.81px;top:1702.72px;line-height:35.52px;font-size:31.80px;letter-spacing:2.09px;word-spacing:0.70px;font-weight:normal;color:#000;">26.11.2025 07:51:52</div>
<div class="a t" style="left:3397.23px;top:1702.72px;line-height:35.52px;font-size:31.80px;letter-spacing:1.88px;word-spacing:0.70px;font-weight:normal;color:#000;">05.12.2025 10:17:32</div>
<div class="a" style="left:2132px;top:1234px;width:661px;height:2.5px;background:rgba(0,0,0,0.28)"></div>
<div class="a t" style="left:2130.94px;top:1270.08px;line-height:38.78px;font-size:34.72px;letter-spacing:0.72px;word-spacing:1.15px;font-weight:bold;color:#000;">Plnění:</div>
<div class="a" style="left:2132px;top:1341.5px;width:661px;height:2.5px;background:rgba(0,0,0,0.28)"></div>
<div class="a t" style="left:2131.81px;top:1377.08px;line-height:38.78px;font-size:34.72px;letter-spacing:0.34px;word-spacing:1.15px;font-weight:bold;color:#000;">Oblasti konzultací:</div>
<div class="a" style="left:2132px;top:1480px;width:661px;height:2.5px;background:rgba(0,0,0,0.28)"></div>
<div class="a t" style="left:2130.94px;top:1516.08px;line-height:38.78px;font-size:34.72px;letter-spacing:0.72px;word-spacing:1.15px;font-weight:bold;color:#000;">Plnění:</div>
<div class="a" style="left:2132px;top:1587.5px;width:661px;height:2.5px;background:rgba(0,0,0,0.28)"></div>
<div class="a t" style="left:2131.81px;top:1623.08px;line-height:38.78px;font-size:34.72px;letter-spacing:0.34px;word-spacing:1.15px;font-weight:bold;color:#000;">Oblasti konzultací:</div>
<div class="a" style="left:3616px;top:1444px;width:142px;height:160px;background:#fff;border-radius:24px"></div>
<div class="a" style="left:3626px;top:1454px;width:110px;height:65px;background:#0474a4;border-radius:26px"></div>
<div class="a t" style="left:3626px;width:110px;text-align:center;text-indent:-1.21px;top:1470.12px;line-height:35.03px;font-size:31.36px;letter-spacing:-1.21px;word-spacing:1.04px;font-weight:bold;color:#fff;">Dolů</div>
<div class="a" style="left:3626px;top:1529px;width:122px;height:65px;background:#e8e7ec;border-radius:26px"></div>
<div class="a t" style="left:3626px;width:122px;text-align:center;text-indent:1.19px;top:1544.42px;line-height:35.52px;font-size:31.80px;letter-spacing:1.19px;word-spacing:0.70px;font-weight:normal;color:#000;">Skrýt</div>
<div class="a" style="left:3821px;top:25px;width:5px;height:827px;background:#8f8f8f;border-radius:3px"></div>
<div class="a" style="left:3830px;top:0px;width:1px;height:1803px;background:#8a8a8a"></div>
<div class="a" style="left:3831px;top:0px;width:1px;height:1803px;background:#000"></div>
</body></html>
